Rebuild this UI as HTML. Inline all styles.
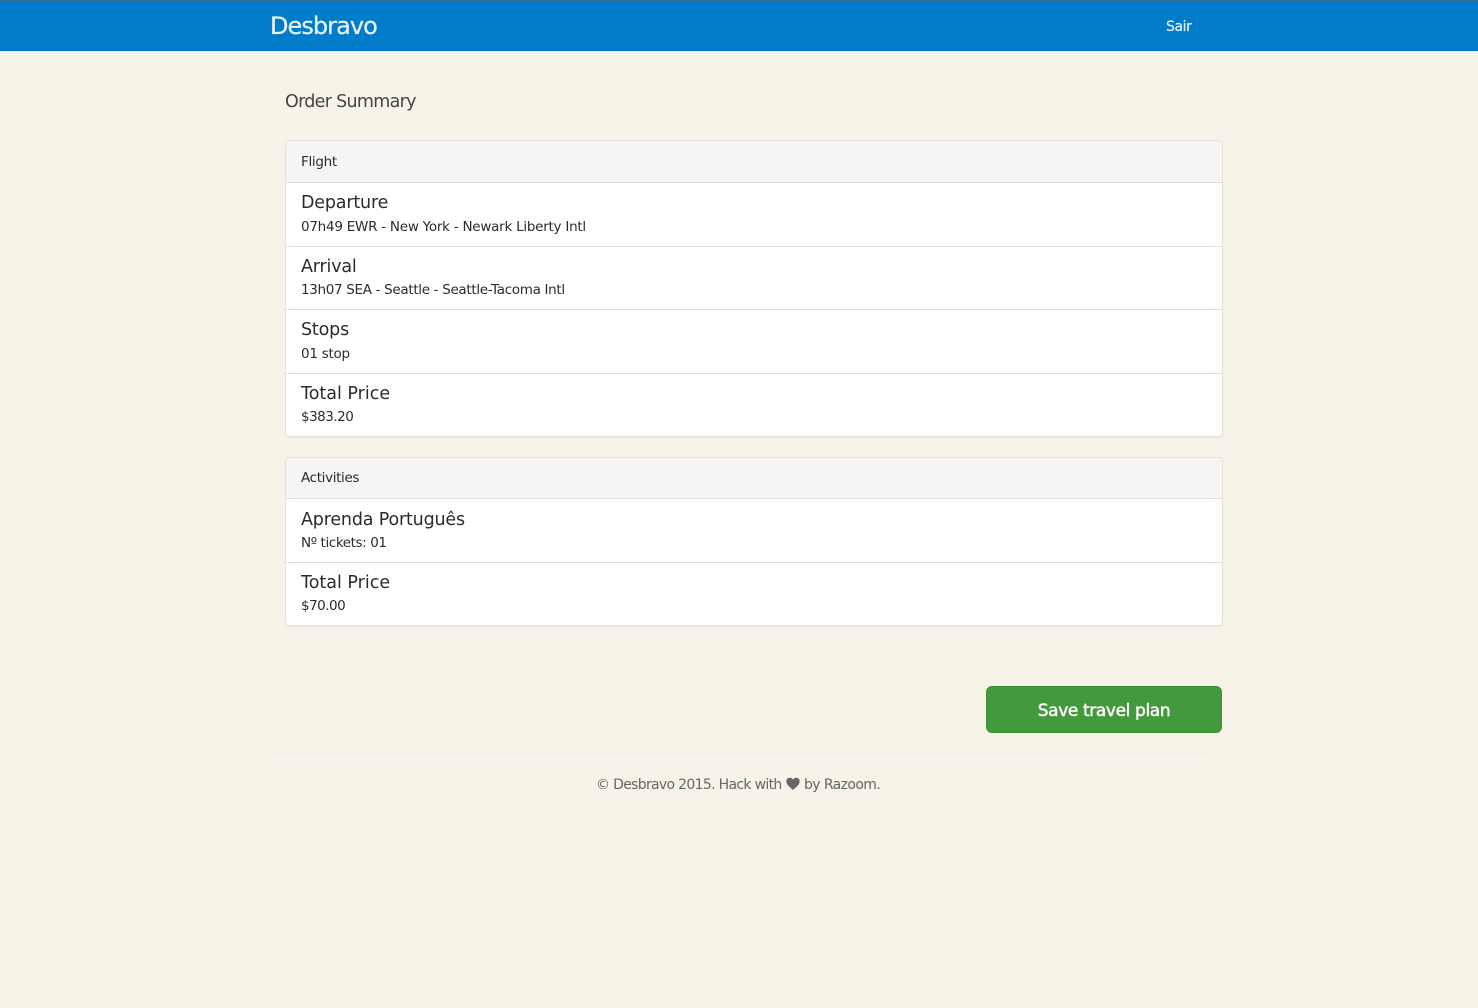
<!DOCTYPE html>
<html lang="en">
<head>
<meta charset="utf-8">
<title>Desbravo</title>
<style>
html,body{margin:0;padding:0;background:#f6f4e9;}
body{position:relative;width:1478px;height:1008px;overflow:hidden;font-family:"DejaVu Sans","Liberation Sans",sans-serif;color:#333;}
.t{position:absolute;white-space:nowrap;line-height:1;}
.nav{position:absolute;left:0;top:0;width:1478px;height:51px;background:#007cc8;border-top:1px solid #3b7096;box-sizing:border-box;}
.panel{position:absolute;left:285px;width:938px;box-sizing:border-box;background:#fff;border:1px solid #e4e3dd;border-radius:4px;box-shadow:0 1px 1px rgba(0,0,0,.05);}
.head{position:absolute;left:0;right:0;top:0;background:#f5f5f5;border-radius:3px 3px 0 0;}
.line{position:absolute;left:0;right:0;height:1px;background:#dfdfdf;}
.h{font-size:17.5px;color:#2b2b2b;letter-spacing:-.18px;}
.s{font-size:13.5px;color:#2b2b2b;letter-spacing:-.28px;}
.btn{position:absolute;left:986px;top:686px;width:236px;height:47px;box-sizing:border-box;background:#439a3d;border:1px solid #3b8d36;border-radius:6px;}
</style>
</head>
<body>
<div class="nav"></div>
<div class="t" style="left:270px;top:14px;font-size:24px;color:#e8f1f7;letter-spacing:-.95px;-webkit-text-stroke:.25px #e8f1f7;">Desbravo</div>
<div class="t" style="left:1166px;top:20px;font-size:14px;color:#e8f1f7;letter-spacing:-.4px;-webkit-text-stroke:.2px #e8f1f7;">Sair</div>

<div class="t" style="left:285px;top:94px;font-size:17.5px;color:#444;letter-spacing:-.7px;">Order Summary</div>

<div class="panel" style="top:140px;height:297px;">
  <div class="head" style="height:41px;"></div>
  <div class="line" style="top:41px;"></div>
  <div class="line" style="top:105px;"></div>
  <div class="line" style="top:168px;"></div>
  <div class="line" style="top:232px;"></div>
</div>
<div class="t s" style="left:301px;top:156px;letter-spacing:-.3px;">Flight</div>
<div class="t h" style="left:301px;top:195px;">Departure</div>
<div class="t s" style="left:301px;top:221px;letter-spacing:-.25px;">07h49 EWR - New York - Newark Liberty Intl</div>
<div class="t h" style="left:301px;top:259px;">Arrival</div>
<div class="t s" style="left:301px;top:284px;letter-spacing:-.32px;">13h07 SEA - Seattle - Seattle-Tacoma Intl</div>
<div class="t h" style="left:301px;top:322px;">Stops</div>
<div class="t s" style="left:301px;top:348px;letter-spacing:-.25px;">01 stop</div>
<div class="t h" style="left:301px;top:386px;letter-spacing:0;">Total Price</div>
<div class="t s" style="left:301px;top:411px;letter-spacing:-.5px;">$383.20</div>

<div class="panel" style="top:457px;height:169px;">
  <div class="head" style="height:40px;"></div>
  <div class="line" style="top:40px;"></div>
  <div class="line" style="top:104px;"></div>
</div>
<div class="t s" style="left:301px;top:472px;letter-spacing:-.35px;">Activities</div>
<div class="t h" style="left:301px;top:512px;">Aprenda Português</div>
<div class="t s" style="left:301px;top:537px;letter-spacing:-.4px;">Nº tickets: 01</div>
<div class="t h" style="left:301px;top:575px;letter-spacing:0;">Total Price</div>
<div class="t s" style="left:301px;top:600px;letter-spacing:-.5px;">$70.00</div>

<div class="btn"></div>
<div class="t" style="left:986px;width:236px;text-align:center;top:703px;font-size:17px;color:#fff;letter-spacing:-.38px;-webkit-text-stroke:.45px #fff;">Save travel plan</div>

<div style="position:absolute;left:270px;top:752px;width:937px;height:1px;background:#eeeeea;"></div>

<div class="t" style="left:596px;top:778px;font-size:14px;color:#666;letter-spacing:-.68px;">© Desbravo 2015. Hack with</div>
<svg style="position:absolute;left:786px;top:777px;" width="14" height="14" viewBox="0 0 14 14"><path d="M7 13 C5 11 .3 8 .3 4.3 C.3 2 2 .7 3.8 .7 C5.2 .7 6.4 1.5 7 2.7 C7.6 1.5 8.8 .7 10.2 .7 C12 .7 13.7 2 13.7 4.3 C13.7 8 9 11 7 13 Z" fill="#666"/></svg>
<div class="t" style="left:804px;top:778px;font-size:14px;color:#666;letter-spacing:-.6px;">by Razoom.</div>
</body>
</html>
